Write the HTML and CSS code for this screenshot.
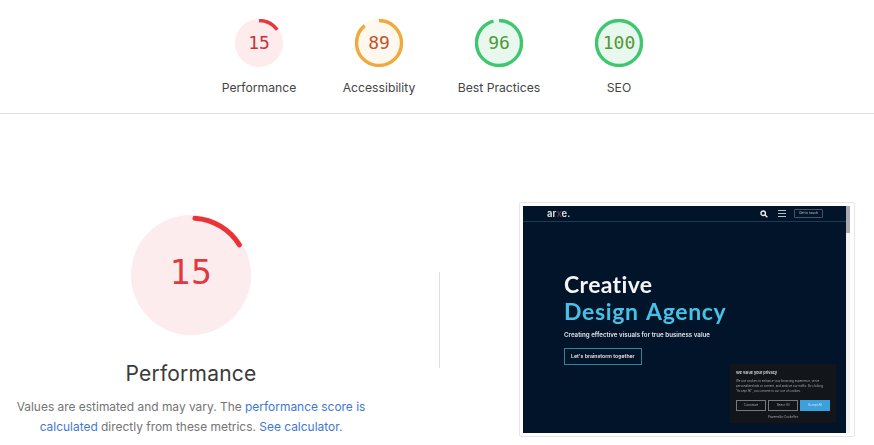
FILE: index.html
```html
<!DOCTYPE html>
<html lang="en">
<head>
    <meta charset="UTF-8">
    <meta name="viewport" content="width=device-width, initial-scale=1.0">
    <title>Lighthouse Report</title>
    <link rel="stylesheet" href="styles.css">
</head>
<body>
    <header class="scores">
        <div class="score">
            <svg class="gauge gauge-red" viewBox="0 0 48 48">
                <circle class="gauge-bg" cx="24" cy="24" r="24"></circle>
                <circle class="gauge-arc" cx="24" cy="24" r="22.5" pathLength="100" stroke-dasharray="15 100" transform="rotate(-90 24 24)"></circle>
            </svg>
            <span class="score-num num-red">15</span>
            <span class="score-label">Performance</span>
        </div>
        <div class="score">
            <svg class="gauge gauge-orange" viewBox="0 0 48 48">
                <circle class="gauge-bg" cx="24" cy="24" r="24"></circle>
                <circle class="gauge-arc" cx="24" cy="24" r="22.5" pathLength="100" stroke-dasharray="89 100" transform="rotate(-90 24 24)"></circle>
            </svg>
            <span class="score-num num-orange">89</span>
            <span class="score-label">Accessibility</span>
        </div>
        <div class="score">
            <svg class="gauge gauge-green" viewBox="0 0 48 48">
                <circle class="gauge-bg" cx="24" cy="24" r="24"></circle>
                <circle class="gauge-arc" cx="24" cy="24" r="22.5" pathLength="100" stroke-dasharray="96 100" transform="rotate(-90 24 24)"></circle>
            </svg>
            <span class="score-num num-green">96</span>
            <span class="score-label">Best Practices</span>
        </div>
        <div class="score">
            <svg class="gauge gauge-green" viewBox="0 0 48 48">
                <circle class="gauge-bg" cx="24" cy="24" r="24"></circle>
                <circle class="gauge-arc" cx="24" cy="24" r="22.5" pathLength="100" stroke-dasharray="100 100" transform="rotate(-90 24 24)"></circle>
            </svg>
            <span class="score-num num-green">100</span>
            <span class="score-label">SEO</span>
        </div>
    </header>

    <main class="detail">
        <section class="summary">
            <div class="big-gauge">
                <svg class="big-svg" viewBox="0 0 120 120">
                    <circle class="big-bg" cx="60" cy="60" r="60"></circle>
                    <circle class="big-arc" cx="60" cy="60" r="57" pathLength="100" stroke-dasharray="15 100" transform="rotate(-86 60 60)"></circle>
                </svg>
                <span class="big-num">15</span>
            </div>
            <h2>Performance</h2>
            <p>Values are estimated and may vary. The <a href="#">performance score is</a> <a href="#">calculated</a> directly from these metrics. <a href="#">See calculator.</a></p>
        </section>

        <div class="divider"></div>

        <figure class="shot">
            <div class="site">
                <div class="site-page">
                    <nav class="site-nav">
                        <span class="site-logo">ar<span class="logo-mark">x</span>e.</span>
                        <svg class="site-search" viewBox="0 0 10 10">
                            <circle cx="4" cy="4" r="2.8"></circle>
                            <line x1="6" y1="6" x2="9.2" y2="9.2"></line>
                        </svg>
                        <span class="site-burger"><i></i><i></i><i></i></span>
                        <span class="site-touch">Get in touch</span>
                    </nav>
                    <div class="hero">
                        <div class="hero-title">Creative</div>
                        <div class="hero-title hero-cyan">Design Agency</div>
                        <div class="hero-sub">Creating effective visuals for true business value</div>
                        <span class="hero-btn">Let's brainstorm together</span>
                    </div>
                    <div class="cookie">
                        <div class="cookie-title">We value your privacy</div>
                        <div class="cookie-text">We use cookies to enhance your browsing experience, serve personalized ads or content, and analyze our traffic. By clicking "Accept All", you consent to our use of cookies.</div>
                        <div class="cookie-btns">
                            <span class="cookie-btn">Customize</span>
                            <span class="cookie-btn">Reject All</span>
                            <span class="cookie-btn cookie-accept">Accept All</span>
                        </div>
                        <div class="cookie-foot">Powered by CookieYes</div>
                    </div>
                </div>
                <div class="site-scroll"><div class="site-thumb"></div></div>
            </div>
        </figure>
    </main>
</body>
</html>
```

FILE: styles.css
```css
body {
    margin: 0;
    height: 445px;
    overflow: hidden;
    background: #fff;
    font-family: Inter, "Liberation Sans", sans-serif;
    color: #3c3c3c;
}

/* top row of small gauges */
.scores {
    display: flex;
    justify-content: center;
    height: 114px;
    padding: 19px 0 0 4px;
    box-sizing: border-box;
    border-bottom: 1px solid #e2e2e2;
}
.score {
    position: relative;
    width: 120px;
    display: flex;
    flex-direction: column;
    align-items: center;
}
.gauge {
    width: 48px;
    height: 48px;
}
.gauge-bg {
    stroke: none;
}
.gauge-arc {
    fill: none;
    stroke-width: 3.4;
}
.gauge-red .gauge-bg { fill: #fdeceb; }
.gauge-red .gauge-arc { stroke: #e5393f; }
.gauge-orange .gauge-bg { fill: #fff8ef; }
.gauge-orange .gauge-arc { stroke: #f2a93b; }
.gauge-green .gauge-bg { fill: #e9f8ef; }
.gauge-green .gauge-arc { stroke: #3ec76f; }
.score-num {
    position: absolute;
    top: 0;
    left: 0;
    right: 0;
    height: 48px;
    line-height: 48px;
    text-align: center;
    font-family: "DejaVu Sans Mono", "Liberation Mono", monospace;
    font-size: 18px;
}
.num-red { color: #c9343a; }
.num-orange { color: #c4532a; }
.num-green { color: #4f9a35; }
.score-label {
    margin-top: 13px;
    font-size: 12.2px;
    line-height: 15px;
    color: #444;
}

/* main area */
.detail {
    display: flex;
    align-items: flex-start;
    padding-top: 88px;
}
.summary {
    width: 382px;
    flex: none;
    text-align: center;
}
.big-gauge {
    position: relative;
    width: 120px;
    height: 120px;
    margin: 13px auto 0;
}
.big-svg {
    display: block;
    width: 120px;
    height: 120px;
}
.big-bg {
    fill: #fdeced;
}
.big-arc {
    fill: none;
    stroke: #ea3237;
    stroke-width: 5;
    stroke-linecap: round;
}
.big-num {
    position: absolute;
    top: 0;
    left: 0;
    right: 0;
    line-height: 116px;
    font-family: "DejaVu Sans", "Liberation Sans", sans-serif;
    font-size: 33px;
    color: #e2373c;
}
.summary h2 {
    margin: 24px 0 0;
    font-size: 21px;
    font-weight: 400;
    line-height: 30px;
    letter-spacing: 0.2px;
    color: #3a3a3a;
}
.summary p {
    margin: 8px 0 0 0;
    padding: 0 14px;
    font-size: 11.95px;
    line-height: 20px;
    color: #757575;
}
.summary a {
    color: #3f78d4;
    text-decoration: none;
}
.divider {
    flex: none;
    width: 1px;
    height: 96px;
    margin: 70px 79px 0 57px;
    background: #dcdcdc;
}

/* page screenshot */
.shot {
    flex: none;
    margin: 0;
    padding: 3px 4px 3px 3px;
    border: 1px solid #e6e6e6;
    border-radius: 2px;
    background: #fff;
}
.site {
    display: flex;
    width: 327px;
    height: 227px;
    filter: blur(0.4px);
}
.site-page {
    position: relative;
    width: 323px;
    background: #02142a;
    color: #fff;
}
.site-nav {
    display: flex;
    align-items: center;
    height: 15px;
    padding: 0 23px 0 24px;
    border-bottom: 1px solid #1e3a4e;
}
.site-logo {
    font-size: 9.5px;
    font-weight: 600;
    color: #e4e4e4;
}
.logo-mark {
    color: #5c3a4c;
}
.site-search {
    width: 8px;
    height: 8px;
    margin-left: auto;
    fill: none;
    stroke: #e8e8e8;
    stroke-width: 1.8;
}
.site-burger {
    display: flex;
    flex-direction: column;
    gap: 2px;
    width: 8px;
    margin-left: 10px;
}
.site-burger i {
    height: 1px;
    background: #b8bec4;
}
.site-touch {
    margin-left: 8px;
    padding: 1px 4px;
    border: 1px solid #3f5464;
    border-radius: 1px;
    font-size: 3.3px;
    line-height: 5px;
    color: #c9d0d6;
}
.hero {
    padding: 49px 0 0 41px;
}
.hero-title {
    font-family: Lato, "Liberation Sans", sans-serif;
    font-size: 23px;
    font-weight: 700;
    line-height: 27px;
    letter-spacing: 0.35px;
    color: #f4f4f4;
}
.hero-cyan {
    letter-spacing: 0.65px;
    word-spacing: 2px;
    color: #45c2e6;
}
.hero-sub {
    margin-top: 6px;
    font-size: 6.2px;
    font-weight: 600;
    line-height: 8px;
    color: #dfe4e8;
}
.hero-btn {
    display: inline-block;
    margin-top: 9px;
    padding: 4px 6px;
    border: 1px solid #35839a;
    font-size: 5.2px;
    font-weight: 600;
    line-height: 7px;
    color: #e8e8e8;
}
.cookie {
    position: absolute;
    left: 207px;
    top: 158px;
    width: 106px;
    height: 59px;
    box-sizing: border-box;
    padding: 6px 6px 0;
    background: #121519;
    color: #a9a9a9;
}
.cookie-title {
    font-size: 3.8px;
    font-weight: 700;
    line-height: 5px;
    color: #cfcfcf;
}
.cookie-text {
    margin-top: 4px;
    font-size: 2.9px;
    line-height: 5px;
}
.cookie-btns {
    display: flex;
    gap: 2px;
    margin-top: 6px;
}
.cookie-btn {
    flex: 1;
    height: 11px;
    box-sizing: border-box;
    border: 1px solid #77797c;
    font-size: 2.9px;
    line-height: 9px;
    text-align: center;
}
.cookie-accept {
    border-color: #3ca0dc;
    background: #3ca0dc;
    color: #d6eaf7;
}
.cookie-foot {
    margin-top: 4px;
    font-size: 2.8px;
    line-height: 5px;
    text-align: center;
}
.site-scroll {
    width: 4px;
    background: #f2f2f2;
}
.site-thumb {
    height: 27px;
    background: #a8acb0;
}
```
